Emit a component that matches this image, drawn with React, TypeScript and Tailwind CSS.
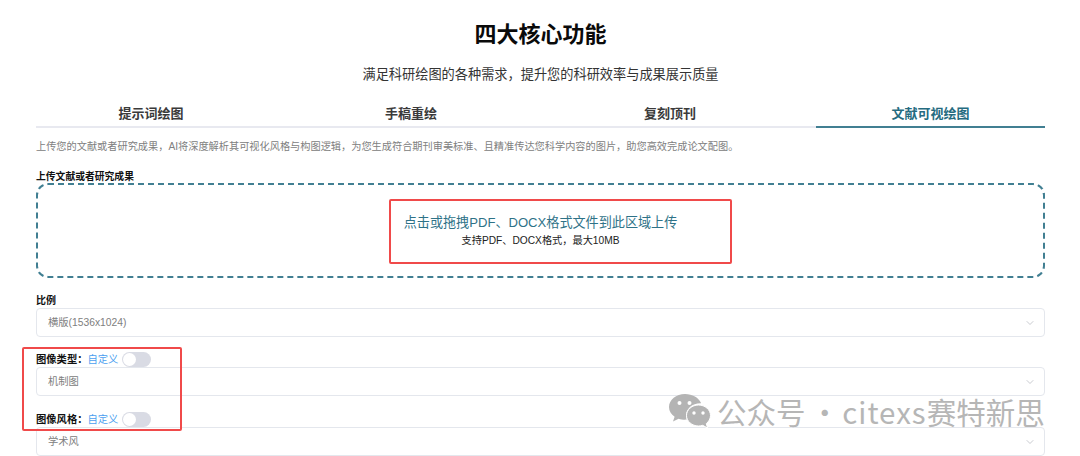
import React from "react";
import { ChevronDown } from "lucide-react";

const tabs = ["提示词绘图", "手稿重绘", "复刻顶刊", "文献可视绘图"];

const Toggle = () => (
  <span className="ml-[4px] flex h-[15px] w-[29px] items-center rounded-full bg-[#d9dbe4] px-[1px]">
    <span className="h-[13px] w-[13px] rounded-full bg-white" />
  </span>
);

const SelectBox = ({ value }: any) => (
  <div className="flex h-[29px] items-center justify-between rounded-[4px] border border-[#e4e7ed] bg-white pl-[11px] pr-[8px] text-[10.3px] text-[#808080]">
    <span>{value}</span>
    <ChevronDown size={12} strokeWidth={1.25} className="text-[#a8acb4]" />
  </div>
);

const CustomLabel = ({ text }: any) => (
  <div className="flex h-[15px] items-center text-[10.3px] leading-none">
    <span className="pt-[2px] font-bold text-[#111]">{text}：</span>
    <span className="pt-[2px] text-[#4c9ff0]">自定义</span>
    <Toggle />
  </div>
);

const App = () => {
  return (
    <div className="relative h-[456px] w-[1080px] overflow-hidden bg-white font-['Liberation_Sans','Noto_Sans_CJK_SC',sans-serif]">
      <div className="ml-[36px] w-[1009px]">
        <h1 className="pt-[20px] text-center text-[22px] font-bold leading-[30px] text-[#0a0a0a]">四大核心功能</h1>
        <p className="mt-[16px] text-center text-[13.2px] leading-[18px] text-[#333]">
          满足科研绘图的各种需求，提升您的科研效率与成果展示质量
        </p>

        <div className="mt-[20px] grid grid-cols-[230px_290px_260px_229px] border-b-2 border-[#e8e9f0]">
          {tabs.map((tab, i) => (
            <div
              key={tab}
              className={
                i === 3
                  ? "-mb-[2px] h-[24px] border-b-2 border-[#417f92] text-center text-[13px] font-bold leading-[20px] text-[#256b80]"
                  : i === 2
                    ? "-mb-[2px] h-[24px] pr-[32px] text-center text-[13px] font-bold leading-[20px] text-[#3a3a3a]"
                    : "-mb-[2px] h-[24px] text-center text-[13px] font-bold leading-[20px] text-[#3a3a3a]"
              }
            >
              {tab}
            </div>
          ))}
        </div>

        <p className="mt-[12px] text-[10.2px] leading-[14px] text-[#808080]">
          上传您的文献或者研究成果，AI将深度解析其可视化风格与构图逻辑，为您生成符合期刊审美标准、且精准传达您科学内容的图片，助您高效完成论文配图。
        </p>

        <div className="mt-[16px] h-[13px] text-[9.8px] font-bold leading-[14px] text-[#111]">上传文献或者研究成果</div>

        <div className="flex h-[95px] flex-col items-center justify-center rounded-[12px] border-2 border-dashed border-[#417f92] pb-[1px]">
          <div className="text-[13.1px] leading-[20px] text-[#2e7287]">点击或拖拽PDF、DOCX格式文件到此区域上传</div>
          <div className="mt-[1px] text-[10.2px] leading-[14px] text-[#222]">支持PDF、DOCX格式，最大10MB</div>
        </div>

        <div className="mt-[16px] h-[14px] text-[10px] font-bold leading-[14px] text-[#111]">比例</div>
        <SelectBox value="横版(1536x1024)" />

        <div className="mt-[15px]">
          <CustomLabel text="图像类型" />
        </div>
        <SelectBox value="机制图" />

        <div className="mt-[16px]">
          <CustomLabel text="图像风格" />
        </div>
        <SelectBox value="学术风" />
      </div>

      {/* 红色标注框 */}
      <div className="absolute left-[389px] top-[199px] h-[65px] w-[343px] rounded-[2px] border-2 border-[#f04a4a]" />
      <div className="absolute left-[22px] top-[347px] h-[84px] w-[160px] rounded-[2px] border-2 border-[#f04a4a]" />

      {/* 水印 */}
      <div className="absolute left-[668px] top-[393px] flex items-center">
        <svg width="43" height="36" viewBox="0 0 43 36" fill="#b4b4b4">
          <path d="M17 1C8.2 1 1 6.8 1 14c0 4 2.2 7.4 5.6 9.8L5 28.5l5.6-2.8c2 .6 4 1 6.4 1 .6 0 1.2 0 1.8-.1-.5-1.300-.8-2.700-.8-4.100 0-6.800 6.400-12.300 14.300-12.300h.9C30.700 4.700 24.400 1 17 1Z" />
          <path d="M42.500 22.500C42.500 16.600 36.900 12 30.500 12S18.500 16.600 18.500 22.500 24.100 33 30.500 33c1.500 0 2.900-.2 4.200-.7l4.800 2.700-1.200-4.400c2.500-1.900 4.200-4.900 4.200-8.100Z" stroke="#fff" strokeWidth="1" />
          <circle cx="11.500" cy="10" r="2" fill="#fff" />
          <circle cx="21.500" cy="10" r="2" fill="#fff" />
          <circle cx="26" cy="20" r="1.700" fill="#fff" />
          <circle cx="35" cy="20" r="1.700" fill="#fff" />
        </svg>
        <span className="ml-[6px] whitespace-nowrap font-['Noto_Sans_CJK_SC',sans-serif] text-[29.5px] leading-[36px] text-[#b6b6b6]">
          公众号
          <span className="tracking-[-2px]"> · </span>
          <span className="tracking-[1px]">citexs</span>
          赛特新思
        </span>
      </div>
    </div>
  );
};

export default App;
